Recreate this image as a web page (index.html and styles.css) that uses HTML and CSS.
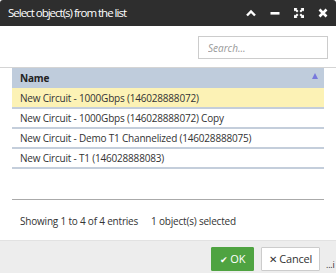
FILE: index.html
```html
<!DOCTYPE html>
<html lang="en">

<head>
    <meta charset="UTF-8">
    <title>Select object(s)</title>
    <link rel="stylesheet" href="styles.css">
</head>

<body>
    <div class="dialog">
        <div class="titlebar">
            <span class="title">Select object(s) from the list</span>
            <div class="title-icons">
                <svg width="10" height="8" viewBox="0 0 10 8"><path d="M1 6.5 L5 2.5 L9 6.5" fill="none" stroke="#fff" stroke-width="2.4"/></svg>
                <svg width="10" height="8" viewBox="0 0 10 8"><rect x="0.5" y="3" width="9" height="2.6" fill="#fff"/></svg>
                <svg width="10" height="10" viewBox="0 0 10 10" fill="#fff">
                    <path d="M0 0h3.5l-1 1 2 2-1.5 1.5-2-2-1 1z"/>
                    <path d="M10 0v3.5l-1-1-2 2-1.5-1.5 2-2-1-1z"/>
                    <path d="M0 10v-3.5l1 1 2-2 1.5 1.5-2 2 1 1z"/>
                    <path d="M10 10h-3.5l1-1-2-2 1.5-1.5 2 2 1-1z"/>
                </svg>
                <svg width="10" height="10" viewBox="0 0 10 10"><path d="M1.5 1.5 L8.5 8.5 M8.5 1.5 L1.5 8.5" stroke="#fff" stroke-width="2.6"/></svg>
            </div>
        </div>

        <div class="search-row">
            <input type="text" class="search" placeholder="Search...">
        </div>

        <div class="list-area">
            <table class="list">
                <thead>
                    <tr>
                        <th>Name <span class="sort"></span></th>
                    </tr>
                </thead>
                <tbody>
                    <tr class="selected"><td>New Circuit - 1000Gbps (146028888072)</td></tr>
                    <tr><td>New Circuit - 1000Gbps (146028888072) Copy</td></tr>
                    <tr><td>New Circuit - Demo T1 Channelized (146028888075)</td></tr>
                    <tr><td>New Circuit - T1 (146028888083)</td></tr>
                </tbody>
            </table>
        </div>

        <div class="info">
            <span>Showing 1 to 4 of 4 entries</span>
            <span>1 object(s) selected</span>
        </div>

        <div class="footer">
            <button class="btn btn-ok"><span class="check">&#10004;</span> OK</button>
            <button class="btn btn-cancel"><span class="cross">&#10005;</span> Cancel</button>
            <span class="grip">...i</span>
        </div>
    </div>
</body>

</html>
```

FILE: styles.css
```css
body {
    margin: 0;
    font-family: 'Open Sans', 'Liberation Sans', sans-serif;
    font-size: 10px;
    letter-spacing: -0.2px;
    color: #333;
    background-color: #fff;
}

.dialog {
    width: 336px;
    height: 273px;
    display: flex;
    flex-direction: column;
    background-color: #fff;
}

.titlebar {
    height: 26px;
    background-color: #2e2e2e;
    border-radius: 3px 3px 0 0;
    display: flex;
    align-items: center;
    justify-content: space-between;
    padding: 0 8px 0 8px;
    color: #fff;
}

.title {
    font-size: 11.5px;
    letter-spacing: -1px;
    margin-top: -2px;
}

.title-icons {
    display: flex;
    align-items: center;
    gap: 14px;
    margin-top: -1px;
}

.search-row {
    display: flex;
    justify-content: flex-end;
    padding: 10px 8px 8px 0;
}

.search {
    width: 130px;
    height: 23px;
    box-sizing: border-box;
    border: 1px solid #ccc;
    padding: 0 9px;
    font-family: 'Open Sans', 'Liberation Sans', sans-serif;
    font-size: 10px;
    color: #555;
    outline: none;
}

.search::placeholder {
    color: #999;
    font-style: italic;
}

.list-area {
    border-top: 1px solid #d4d4d4;
    height: 132px;
    padding: 0 12px;
}

.list {
    width: 100%;
    border-collapse: collapse;
    border-bottom: 1px solid #aaa;
    height: 132px;
}

.list tbody::after {
    content: "";
    display: table-row;
}

.list th {
    height: 20px;
    box-sizing: border-box;
    background-color: #bfccdc;
    text-align: left;
    padding: 0 8px;
    font-weight: bold;
    color: #222;
    position: relative;
}

.sort {
    position: absolute;
    right: 6px;
    top: 5px;
    width: 0;
    height: 0;
    border-left: 3px solid transparent;
    border-right: 3px solid transparent;
    border-bottom: 6px solid #7878dc;
}

.list td {
    height: 20px;
    box-sizing: border-box;
    padding: 0 8px;
    border-bottom: 2px solid #c4cedb;
    color: #333;
    white-space: nowrap;
}

.list tr.selected td {
    background-color: #fcf2b5;
}

.info {
    display: flex;
    gap: 13px;
    padding: 14px 20px 0 20px;
    height: 26px;
    color: #333;
}

.footer {
    margin-top: auto;
    height: 33px;
    background-color: #ededed;
    border-top: 1px solid #e2e2e2;
    box-sizing: border-box;
    display: flex;
    align-items: center;
    justify-content: flex-end;
    padding: 3px 0 0 0;
}

.btn {
    height: 24px;
    font-family: 'Open Sans', 'Liberation Sans', sans-serif;
    font-size: 11px;
    letter-spacing: -0.2px;
    border-radius: 1px;
    cursor: pointer;
}

.btn-ok {
    width: 43px;
    background-color: #4fa341;
    border: 1px solid #4fa341;
    color: #fff;
    padding: 0 4px;
    margin-right: 7px;
}

.btn-cancel {
    width: 59px;
    background-color: #fff;
    border: 1px solid #ccc;
    color: #333;
    padding: 0 4px;
}

.check {
    font-size: 9px;
}

.cross {
    font-size: 10px;
}

.grip {
    align-self: flex-end;
    font-size: 9px;
    width: 16px;
    padding-left: 6px;
    box-sizing: border-box;
    color: #333;
    line-height: 12px;
    margin-bottom: 2px;
}
```
